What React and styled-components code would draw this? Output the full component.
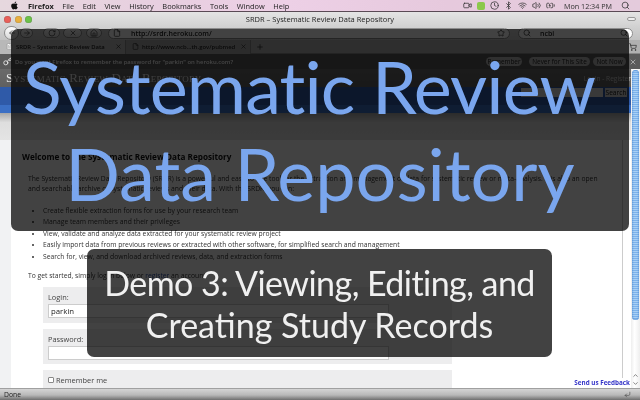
import React from "react";
import styled, { createGlobalStyle } from "styled-components";
import { FaApple } from "react-icons/fa";
import {
  ArrowLeft, ArrowRight, RotateCw, X, Home, Star, Search, Plus, Key, Bluetooth, Wifi,
  Volume2, Clock, Video, BatteryCharging, File, FileText, ShoppingCart, ChevronDown, ChevronUp, CornerDownLeft,
} from "lucide-react";

const Global = createGlobalStyle`
  html, body { margin: 0; padding: 0; background: #fff; }
  * { box-sizing: border-box; }
  #root { width: 640px; height: 400px; }
`;

const UI = `"Open Sans", "DejaVu Sans", sans-serif`;

const Stage = styled.div`
  position: relative;
  width: 640px;
  height: 400px;
  overflow: hidden;
  display: flex;
  flex-direction: column;
  font-family: ${UI};
  color: #333;
  background: #fff;
  filter: blur(0.3px);
`;

const MenuBar = styled.div`
  height: 12px;
  flex: none;
  display: flex;
  align-items: center;
  padding-left: 10px;
  background: linear-gradient(90deg, #e6d8de 0%, #e8cfe0 25%, #edd0e6 45%, #e6c9dd 70%, #e4cbdc 100%);
  border-bottom: 1px solid #5a4a55;
  font-size: 7.4px;
  color: #222;
`;

const AppleIcon = styled(FaApple)`
  width: 9px;
  height: 9px;
  margin-right: 9px;
  color: #111;
`;

const MenuItem = styled.span`
  margin-right: ${(p) => p.$gap}px;
  font-weight: ${(p) => (p.$bold ? 700 : 400)};
  white-space: nowrap;
`;

const MenuStatus = styled.div`
  margin-left: auto;
  display: flex;
  align-items: center;
  gap: 5px;
  padding-right: 10px;
  color: #333;
`;

const StatusGlyph = styled.span`
  display: inline-flex;
  width: 9px;
  height: 9px;
  justify-content: center;
  align-items: center;
  svg { width: 9px; height: 9px; }
`;

const GreenTag = styled.span`
  width: 8px;
  height: 8px;
  border-radius: 2px;
  background: #8cc84b;
`;

const TimeText = styled.span`
  font-size: 7.2px;
  margin: 0 4px 0 3.5px;
  white-space: nowrap;
`;

const TitleBar = styled.div`
  height: 14px;
  flex: none;
  position: relative;
  display: flex;
  align-items: center;
  padding-left: 4px;
  gap: 3.5px;
  background: linear-gradient(#e4e4e4, #d2d2d2);
`;

const Light = styled.span`
  width: 7px;
  height: 7px;
  border-radius: 50%;
  background: ${(p) => p.$c};
  box-shadow: inset 0 0 1px rgba(0, 0, 0, 0.5);
`;

const TitleText = styled.span`
  flex: 1;
  text-align: center;
  font-size: 7.5px;
  color: #222;
  margin-left: -19px;
`;

const ZoomPill = styled.span`
  width: 9px;
  height: 4px;
  border-radius: 2px;
  border: 1px solid #999;
  background: #eee;
  margin-right: 4px;
`;

const Toolbar = styled.div`
  height: 14px;
  flex: none;
  display: flex;
  align-items: center;
  padding-left: 4px;
  background: linear-gradient(#d2d2d2, #c2c2c2);
`;

const NavButton = styled.span`
  flex: none;
  width: ${(p) => p.$w}px;
  height: ${(p) => p.$h || 10}px;
  margin-right: ${(p) => p.$gap || 2}px;
  border-radius: 8px;
  border: 1px solid #8c8c8c;
  background: linear-gradient(#fdfdfd, #d8d8d8);
  display: inline-flex;
  align-items: center;
  justify-content: center;
  color: #333;
  svg { width: 8px; height: 8px; }
`;

const Field = styled.div`
  height: 11px;
  flex: none;
  width: ${(p) => p.$w}px;
  margin-right: ${(p) => p.$gap || 0}px;
  border-radius: 6px;
  border: 1px solid #8c8c8c;
  background: #fff;
  display: flex;
  align-items: center;
  font-size: 7px;
  font-weight: 600;
  color: #222;
  padding: 0 4px;
  svg { width: 8px; height: 8px; flex: none; }
`;

const FieldText = styled.span`
  margin-left: ${(p) => p.$m}px;
  flex: 1;
`;

const TabBar = styled.div`
  height: 14px;
  flex: none;
  display: flex;
  align-items: center;
  background: #b0b0b0;
  border-bottom: 1px solid #888;
`;

const Tab = styled.div`
  flex: none;
  width: ${(p) => p.$w}px;
  height: 14px;
  padding: 0 3px 0 6px;
  display: flex;
  align-items: center;
  gap: 3px;
  font-size: 5.9px;
  font-weight: 600;
  background: ${(p) => (p.$active ? "#b8b8b8" : "#a8a8a8")};
  border-right: 1px solid #888;
  white-space: nowrap;
  color: #222;
  svg { width: 7px; height: 7px; flex: none; }
`;

const TabIcon = styled(FileText)`
  color: #888;
  fill: #fff;
`;

const TabLabel = styled.span`
  flex: 1;
`;

const TabPlus = styled.span`
  flex: 1;
  padding-left: 5px;
  display: flex;
  align-items: center;
  justify-content: space-between;
  padding-right: 3px;
  svg { width: 8px; height: 8px; color: #222; }
`;

const Notice = styled.div`
  height: 15px;
  flex: none;
  display: flex;
  align-items: center;
  padding: 0 3px;
  background: #5a5a5a;
  font-size: 5.9px;
  font-weight: 600;
  color: #fff;
  white-space: nowrap;
`;

const KeyIcon = styled(Key)`
  width: 9px;
  height: 9px;
  color: #fff;
  margin-right: 3px;
  flex: none;
`;

const NoticeText = styled.span`
  flex: 1;
`;

const NoticeButton = styled.span`
  height: 9px;
  width: ${(p) => p.$w}px;
  margin-left: ${(p) => p.$gap}px;
  flex: none;
  text-align: center;
  line-height: 9px;
  font-weight: 400;
  border-radius: 5px;
  background: #b8b8b8;
  color: #222;
  font-size: 6.4px;
`;

const NoticeClose = styled(X)`
  width: 8px;
  height: 8px;
  margin-left: 3px;
  color: #ccc;
  flex: none;
`;

const Browser = styled.div`
  flex: 1;
  min-height: 0;
  display: flex;
  position: relative;
  background: #fff;
`;

const Page = styled.div`
  flex: 1;
  min-width: 0;
  display: flex;
  flex-direction: column;
`;

const SiteHeader = styled.div`
  height: 18px;
  flex: none;
  display: flex;
  align-items: center;
  justify-content: space-between;
  padding: 0 0 0 6px;
  background: linear-gradient(#6a6a6a, #606060);
`;

const SiteTitle = styled.span`
  font-family: "Liberation Serif", serif;
  font-variant: small-caps;
  font-size: 13px;
  letter-spacing: 0.2px;
  color: #eee;
  white-space: nowrap;
`;

const SiteLinks = styled.span`
  font-size: 6.6px;
  color: #ccc;
  white-space: nowrap;
`;

const NavBand = styled.div`
  height: 26px;
  flex: none;
  display: flex;
  justify-content: flex-end;
  padding: 1px 4px 0 0;
  gap: 2px;
  background: linear-gradient(#2f5aa8 0%, #2f5aa8 68%, #3b6fc4 70%, #3b6fc4 100%);
`;

const SearchInput = styled.span`
  width: 82px;
  height: 9px;
  background: #ddd;
`;

const SearchButton = styled.span`
  width: 22px;
  height: 9px;
  font-size: 6.6px;
  line-height: 9px;
  text-align: center;
  background: #ccc;
  color: #111;
`;

const Fade = styled.div`
  height: 27px;
  flex: none;
  background: linear-gradient(#a8a8a8, #dedede 35%, #e4e4e4);
`;

const Body = styled.div`
  flex: 1;
  min-height: 0;
  overflow: hidden;
  display: flex;
  flex-direction: column;
  background: #fff;
  margin-left: 11px;
  margin-right: 8px;
  border-right: 1px solid #ccc;
  box-shadow: -11px 0 0 #f1f2f3;
`;

const Welcome = styled.section`
  margin-top: 10px;
  flex: none;
  color: #333;
`;

const WelcomeHead = styled.h1`
  margin: 0;
  padding: 0 0 0 11px;
  font-size: 8.17px;
  line-height: 14px;
  font-weight: 700;
  color: #111;
  white-space: nowrap;
`;

const Para = styled.p`
  margin: 10px 0 0;
  padding: 0 0 0 17px;
  font-size: 6.76px;
  line-height: 10px;
  white-space: nowrap;
`;

const List = styled.ul`
  margin: 10.5px 0 0;
  padding: 0 0 0 32px;
  font-size: 6.76px;
  line-height: 11.5px;
`;

const Item = styled.li`
  white-space: nowrap;
`;

const Intro = styled.p`
  margin: 9px 0 0;
  padding-left: 17px;
  font-size: 6.76px;
  line-height: 10px;
  white-space: nowrap;
`;

const Link = styled.span`
  color: #2a4aa0;
`;

const FormRow = styled.div`
  flex: none;
  margin: ${(p) => p.$top}px 0 0 32px;
  width: 409px;
  height: ${(p) => p.$h}px;
  background: #ededee;
  padding: 5px;
  font-size: 7.4px;
  color: #444;
  display: ${(p) => (p.$inline ? "flex" : "block")};
  align-items: center;
  gap: 2px;
`;

const FieldLabel = styled.div`
  height: 10px;
  line-height: 10px;
  margin-bottom: 2px;
`;

const TextInput = styled.div`
  width: 341px;
  height: 14px;
  background: #fff;
  border: 1px solid #ccc;
  padding-left: 2px;
  line-height: 12px;
  font-size: 7.8px;
  color: #222;
`;

const Check = styled.span`
  width: 6px;
  height: 6px;
  border: 1px solid #888;
  border-radius: 1px;
  background: #fff;
  flex: none;
`;

const Scrollbar = styled.div`
  width: 9px;
  flex: none;
  background: linear-gradient(90deg, #eee, #fff 40%, #eee);
  display: flex;
  flex-direction: column;
  padding-top: 1px;
`;

const Thumb = styled.div`
  width: 7px;
  height: 250px;
  flex: none;
  margin-left: 1px;
  border-radius: 4px;
  background: repeating-linear-gradient(#7db2ea 0 1px, #a9d0f5 1px 2px);
  box-shadow: inset 0 0 2px #2c6fc4;
`;

const ScrollArrows = styled.div`
  margin-top: auto;
  display: flex;
  flex-direction: column;
  align-items: center;
  color: #333;
  svg { width: 7px; height: 7px; margin-bottom: 1px; }
`;

const Feedback = styled.span`
  position: absolute;
  right: 10px;
  bottom: 0;
  font-size: 6.3px;
  font-weight: 700;
  line-height: 10px;
  color: #3434c8;
  background: #fff;
  white-space: nowrap;
`;

const StatusBar = styled.div`
  height: 12px;
  flex: none;
  display: flex;
  align-items: center;
  justify-content: space-between;
  padding: 0 9px 0 4px;
  font-size: 6.8px;
  color: #222;
  background: linear-gradient(#d4d4d4, #b8b8b8 55%, #6e6e6e);
  border-top: 1px solid #a0a0a0;
  svg { width: 7px; height: 7px; color: #444; }
`;

const Banner = styled.div`
  position: absolute;
  left: ${(p) => p.$x}px;
  top: ${(p) => p.$y}px;
  width: ${(p) => p.$w}px;
  height: ${(p) => p.$h}px;
  border-radius: 7px;
  background: rgba(0, 0, 0, 0.74);
  display: flex;
  flex-direction: column;
  align-items: center;
  font-family: Lato, "Open Sans", sans-serif;
  font-weight: 400;
  white-space: nowrap;
`;

const BigLines = styled.div`
  padding-top: 14px;
  text-align: center;
`;

const BigLine = styled.div`
  color: #7aa6ee;
  font-size: 72px;
  line-height: 87px;
  letter-spacing: ${(p) => p.$ls}px;
  margin-right: ${(p) => p.$shift}px;
`;

const SubLines = styled.div`
  padding-top: 13px;
  text-align: center;
`;

const SubLine = styled.div`
  color: #f0f0f0;
  font-size: 34px;
  line-height: 42px;
  letter-spacing: ${(p) => p.$ls}px;
`;

export default function App() {
  return (
    <Stage>
      <Global />
      <MenuBar>
        <AppleIcon />
        <MenuItem $bold $gap={8.6}>Firefox</MenuItem>
        <MenuItem $gap={8.6}>File</MenuItem>
        <MenuItem $gap={8.6}>Edit</MenuItem>
        <MenuItem $gap={8.6}>View</MenuItem>
        <MenuItem $gap={8.6}>History</MenuItem>
        <MenuItem $gap={8.6}>Bookmarks</MenuItem>
        <MenuItem $gap={8.6}>Tools</MenuItem>
        <MenuItem $gap={8.6}>Window</MenuItem>
        <MenuItem $gap={0}>Help</MenuItem>
        <MenuStatus>
          <StatusGlyph><Video /></StatusGlyph>
          <GreenTag />
          <StatusGlyph><Clock /></StatusGlyph>
          <StatusGlyph><Bluetooth /></StatusGlyph>
          <StatusGlyph><Wifi /></StatusGlyph>
          <StatusGlyph><Volume2 /></StatusGlyph>
          <StatusGlyph><BatteryCharging /></StatusGlyph>
          <TimeText>Mon 12:34 PM</TimeText>
          <StatusGlyph><Search /></StatusGlyph>
        </MenuStatus>
      </MenuBar>
      <TitleBar>
        <Light $c="#e8605a" />
        <Light $c="#e8b040" />
        <Light $c="#6cc24a" />
        <TitleText>SRDR – Systematic Review Data Repository</TitleText>
        <ZoomPill />
      </TitleBar>
      <Toolbar>
        <NavButton $w={15} $h={14} $gap={1}><ArrowLeft /></NavButton>
        <NavButton $w={13} $gap={10}><ArrowRight /></NavButton>
        <NavButton $w={17} $gap={3}><RotateCw /></NavButton>
        <NavButton $w={19} $gap={4}><X /></NavButton>
        <NavButton $w={16} $gap={6}><Home /></NavButton>
        <Field $w={402} $gap={8}>
          <File />
          <FieldText $m={10}>http://srdr.heroku.com/</FieldText>
          <Star />
        </Field>
        <Field $w={115}>
          <Search />
          <FieldText $m={9}>ncbi</FieldText>
          <Search />
        </Field>
      </Toolbar>
      <TabBar>
        <Tab $active $w={126}>
          <TabIcon />
          <TabLabel>SRDR – Systematic Review Data</TabLabel>
          <X />
        </Tab>
        <Tab $w={125}>
          <File />
          <TabLabel>http://www.ncb...th.gov/pubmed</TabLabel>
          <X />
        </Tab>
        <TabPlus><Plus /><ShoppingCart /></TabPlus>
      </TabBar>
      <Notice>
        <KeyIcon />
        <NoticeText>Do you want Firefox to remember the password for "parkin" on heroku.com?</NoticeText>
        <NoticeButton $gap={0} $w={36}>Remember</NoticeButton>
        <NoticeButton $gap={7} $w={61}>Never for This Site</NoticeButton>
        <NoticeButton $gap={3} $w={33}>Not Now</NoticeButton>
        <NoticeClose />
      </Notice>
      <Browser>
        <Page>
          <SiteHeader>
            <SiteTitle>Systematic Review Data Repository</SiteTitle>
            <SiteLinks>Login - Register</SiteLinks>
          </SiteHeader>
          <NavBand>
            <SearchInput />
            <SearchButton>Search</SearchButton>
          </NavBand>
          <Fade />
          <Body>
            <Welcome>
              <WelcomeHead>Welcome to the Systematic Review Data Repository</WelcomeHead>
              <Para>
                The Systematic Review Data Repository (SRDR) is a powerful and easy-to-use tool for the extraction and management of data for systematic review or meta-analysis. It is also an open
                <br />
                and searchable archive of systematic reviews and their data. With the SRDR, you can:
              </Para>
              <List>
                <Item>Create flexible extraction forms for use by your research team</Item>
                <Item>Manage team members and their privileges</Item>
                <Item>View, validate and analyze data extracted for your systematic review project</Item>
                <Item>Easily import data from previous reviews or extracted with other software, for simplified search and management</Item>
                <Item>Search for, view, and download archived reviews, data, and extraction forms</Item>
              </List>
            </Welcome>
            <Intro>To get started, simply log in below or <Link>register</Link> an account.</Intro>
            <FormRow $top={5.5} $h={36}>
              <FieldLabel>Login:</FieldLabel>
              <TextInput>parkin</TextInput>
            </FormRow>
            <FormRow $top={6} $h={35}>
              <FieldLabel>Password:</FieldLabel>
              <TextInput />
            </FormRow>
            <FormRow $top={6} $h={20} $inline>
              <Check />
              <span>Remember me</span>
            </FormRow>
          </Body>
        </Page>
        <Scrollbar>
          <Thumb />
          <ScrollArrows><ChevronUp /><ChevronDown /></ScrollArrows>
        </Scrollbar>
        <Feedback>Send us Feedback</Feedback>
      </Browser>
      <StatusBar>
        <span>Done</span>
        <CornerDownLeft />
      </StatusBar>
      <Banner $x={11} $y={29} $w={618} $h={202}>
        <BigLines>
          <BigLine $ls={-0.9} $shift={22}>Systematic Review</BigLine>
          <BigLine $ls={0} $shift={0}>Data Repository</BigLine>
        </BigLines>
      </Banner>
      <Banner $x={87} $y={249} $w={465} $h={108}>
        <SubLines>
          <SubLine $ls={-0.55}>Demo 3: Viewing, Editing, and</SubLine>
          <SubLine $ls={0}>Creating Study Records</SubLine>
        </SubLines>
      </Banner>
    </Stage>
  );
}
